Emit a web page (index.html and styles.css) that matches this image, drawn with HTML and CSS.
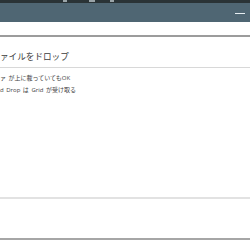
FILE: index.html
```html
<!DOCTYPE html>
<html lang="ja">
<head>
<meta charset="utf-8">
<link rel="stylesheet" href="styles.css">
</head>
<body>
<div class="strip">
  <span class="ic ic1"></span>
  <span class="ic ic2"></span>
  <span class="ic ic3"></span>
</div>
<div class="titlebar"><span class="min"></span></div>
<div class="toolbar"></div>
<div class="content">
  <div class="heading">ァイルをドロップ</div>
  <div class="notes">
    <div class="note">ァ が上に載っていてもOK</div>
    <div class="note">d Drop は Grid が受け取る</div>
  </div>
  <div class="spacer"></div>
  <div class="footer"></div>
</div>
</body>
</html>
```
FILE: styles.css
```css
html, body {
  margin: 0;
  padding: 0;
  width: 250px;
  height: 250px;
  overflow: hidden;
  background: #ffffff;
  font-family: "Noto Sans CJK JP", "Noto Sans", sans-serif;
  color: #333333;
}
.strip {
  height: 3px;
  background: #2a3336;
  display: flex;
  align-items: flex-start;
  overflow: hidden;
}
.ic {
  display: block;
  height: 2px;
  background: #9aa4a8;
}
.ic1 { width: 4px; margin-left: 63px; }
.ic2 { width: 6px; margin-left: 22px; }
.ic3 { width: 4px; margin-left: 15px; }
.titlebar {
  height: 19px;
  background: #4f6673;
  display: flex;
  align-items: center;
  justify-content: flex-end;
  padding-right: 5px;
}
.min {
  display: block;
  width: 10px;
  height: 1px;
  background: #e6eef2;
  margin-top: 2px;
}
.toolbar {
  height: 13px;
  border-bottom: 2px solid #9c9c9c;
  background: #ffffff;
}
.content {
  display: flex;
  flex-direction: column;
}
.heading {
  font-size: 8.6px;
  line-height: 18px;
  padding-top: 10px;
  padding-bottom: 2px;
  color: #3c3c3c;
  border-bottom: 1px solid #d8d8d8;
  white-space: nowrap;
}
.notes {
  padding-top: 4px;
  display: flex;
  flex-direction: column;
}
.note {
  font-family: "Open Sans", "Noto Sans CJK JP", sans-serif;
  font-size: 6px;
  line-height: 12px;
  color: #444444;
  white-space: nowrap;
  word-spacing: 1px;
}
.spacer {
  height: 101px;
  border-bottom: 2px solid #e2e2e2;
}
.footer {
  height: 39px;
  border-bottom: 2px solid #a6a6a6;
}
```
